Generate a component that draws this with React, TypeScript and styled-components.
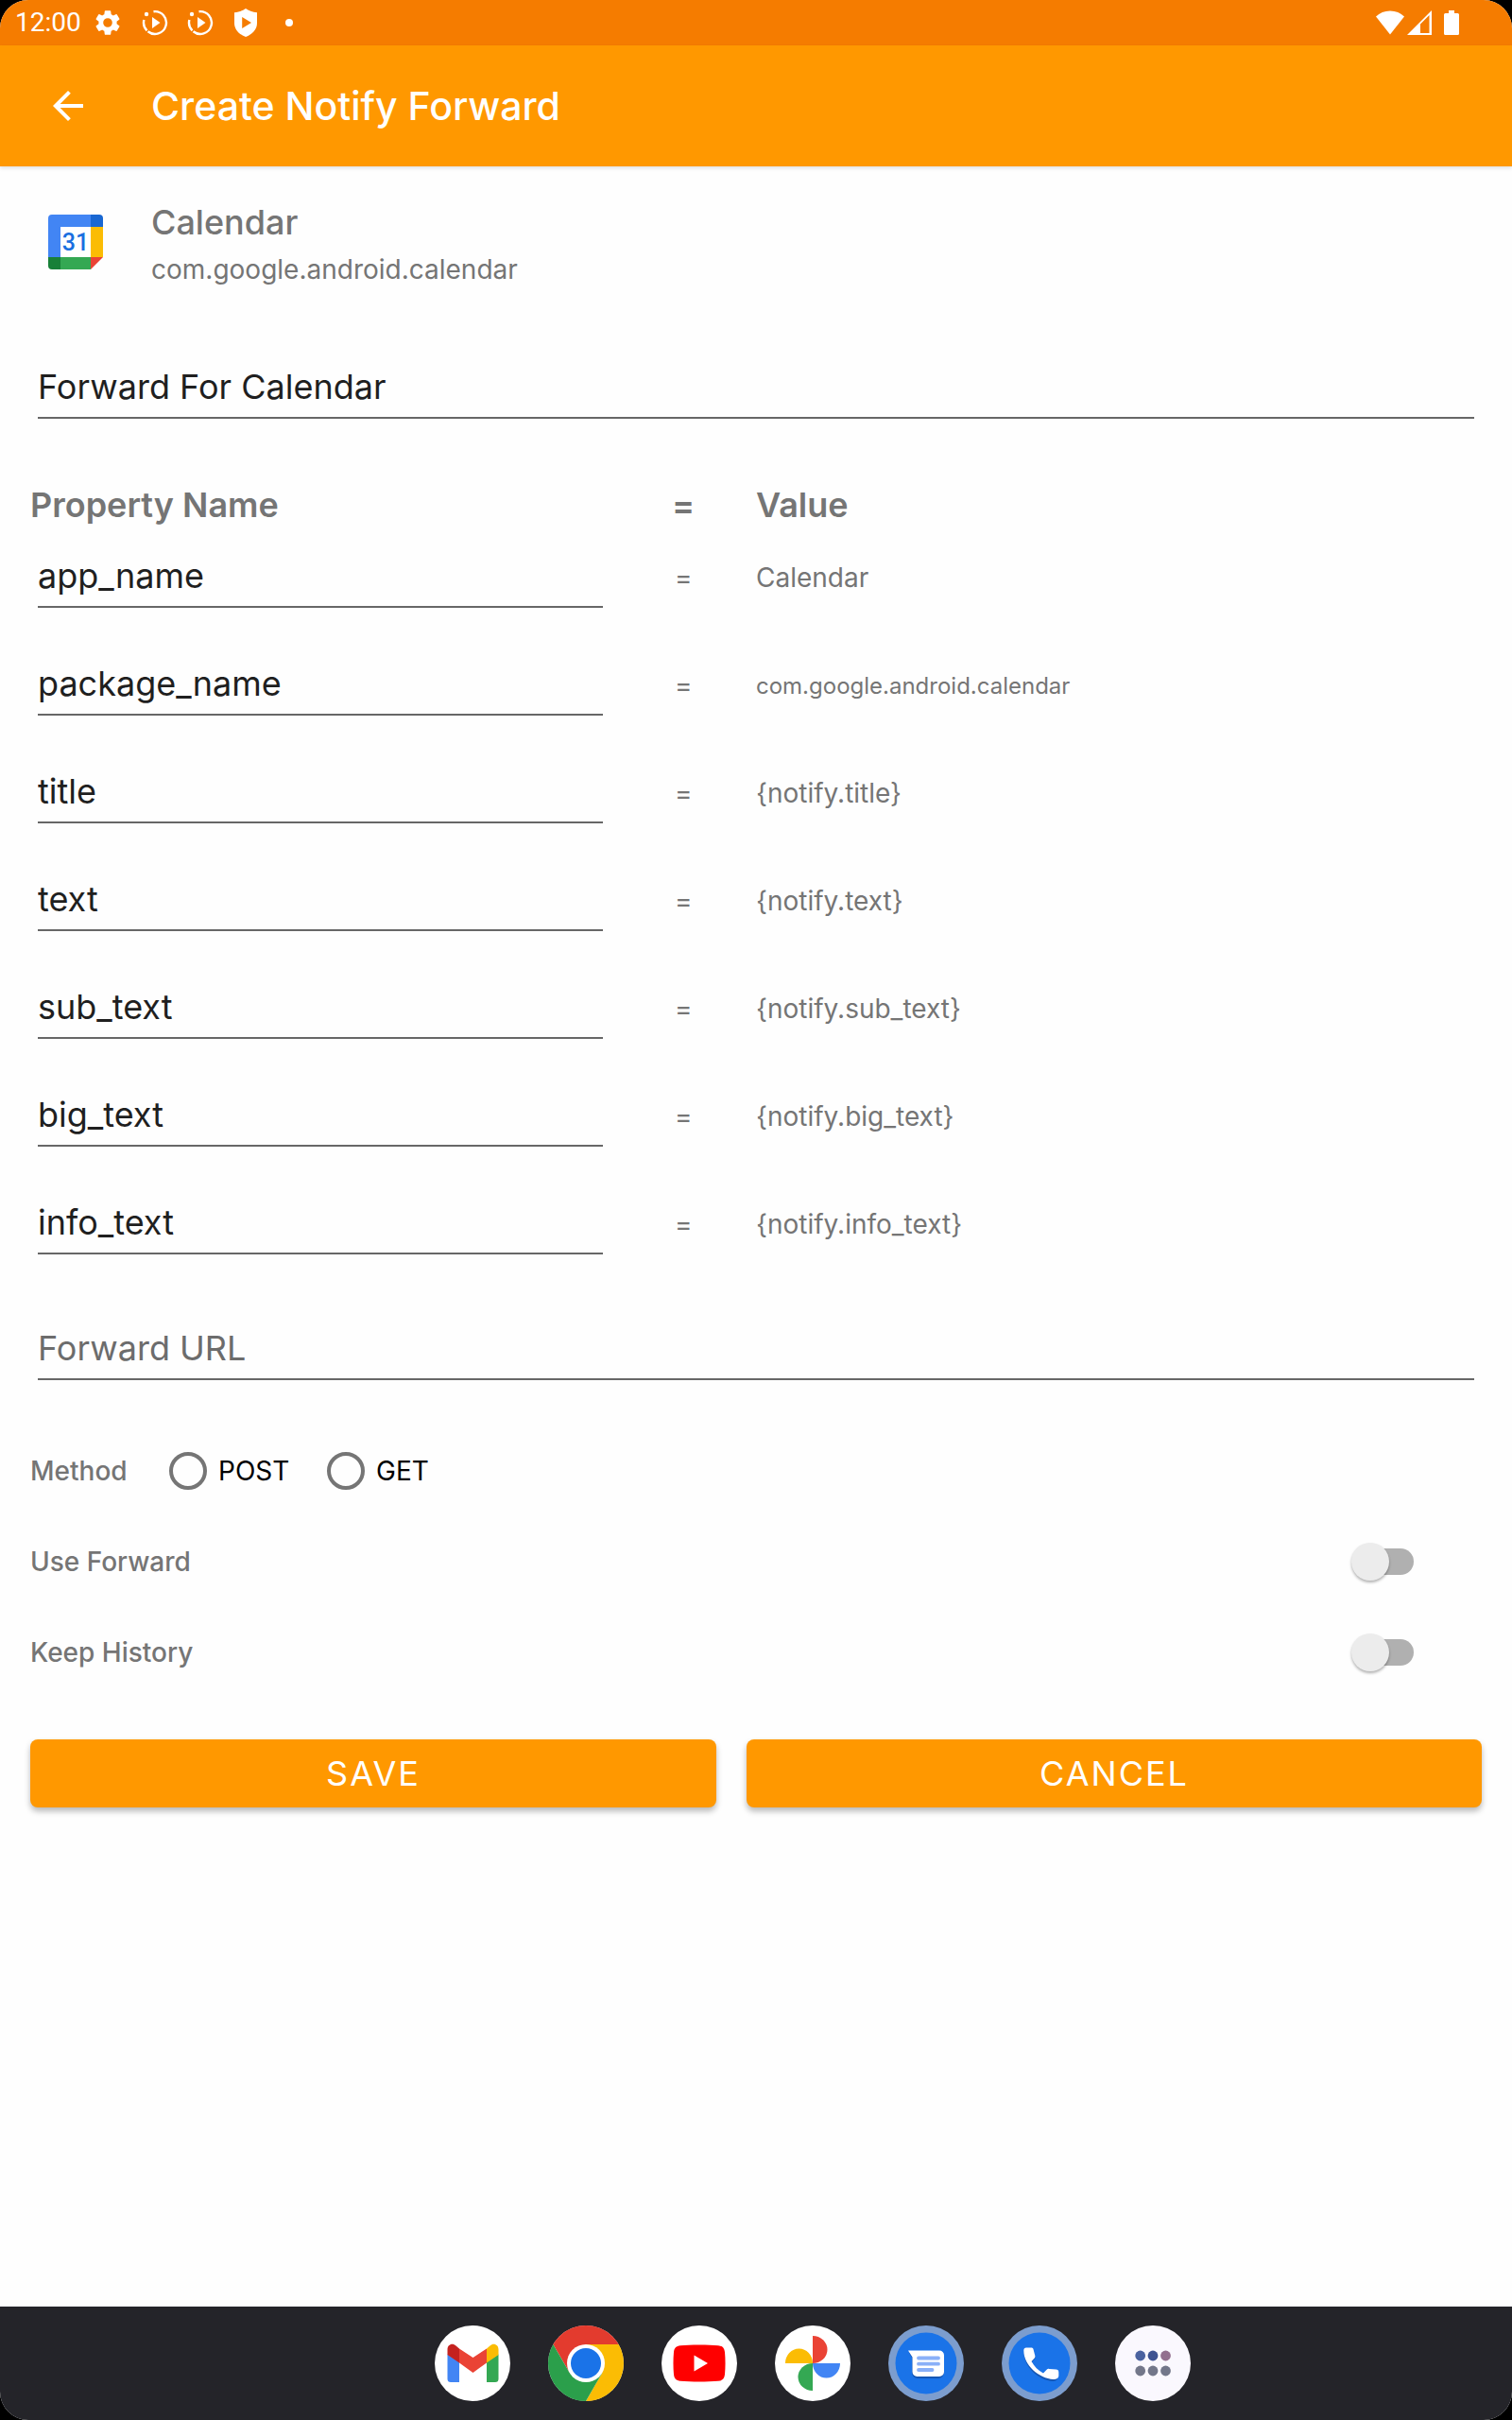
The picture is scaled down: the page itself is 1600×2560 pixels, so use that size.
import React, { useState } from "react";
import styled, { createGlobalStyle } from "styled-components";

const color = {
  primary: "#ff9800",
  primaryDark: "#f57c00",
  text: "#1f1f1f",
  secondary: "#757575",
  line: "#676767",
  surface: "#fefefe",
  dock: "#242429",
};

const GlobalStyle = createGlobalStyle`
  *, *::before, *::after { box-sizing: border-box; }
  body {
    margin: 0;
    background: #000;
    font-family: Inter, "Noto Sans", sans-serif;
  }
`;

const Screen = styled.div`
  display: flex;
  flex-direction: column;
  min-height: 100vh;
  overflow: hidden;
  border-radius: 30px;
  background: ${color.surface};
`;

const StatusBar = styled.div`
  display: flex;
  align-items: center;
  justify-content: space-between;
  height: 48px;
  padding: 0 56px 0 16px;
  background: ${color.primaryDark};
  color: #fff;
`;

const StatusGroup = styled.div<{ $gap: number }>`
  display: flex;
  align-items: center;
  gap: ${(p) => p.$gap}px;
`;

const Clock = styled.time`
  font: 400 28px/48px Roboto, sans-serif;
  margin-right: -8px;
`;

const Glyph = styled.svg`
  display: block;
  flex: none;
`;

const AppBar = styled.header`
  display: flex;
  align-items: center;
  gap: 64px;
  height: 128px;
  padding: 0 48px;
  background: ${color.primary};
  color: #fff;
  box-shadow: 0 2px 4px rgba(0, 0, 0, 0.12);
`;

const IconButton = styled.button`
  display: flex;
  padding: 0;
  border: 0;
  border-radius: 50%;
  background: none;
  color: inherit;
  cursor: pointer;
`;

const BarTitle = styled.h1`
  margin: 0;
  font-size: 41px;
  font-weight: 500;
  line-height: 56px;
`;

const Form = styled.form`
  display: flex;
  flex-direction: column;
  padding: 32px;
`;

const AppSummary = styled.section`
  display: flex;
  gap: 32px;
  margin-bottom: 71px;
`;

const AppIconBox = styled.div`
  display: flex;
  align-items: center;
  justify-content: center;
  width: 96px;
  height: 96px;
`;

const AppName = styled.h2`
  margin: 0;
  color: ${color.secondary};
  font-size: 36px;
  font-weight: 500;
  line-height: 54px;
`;

const PackageName = styled.p`
  margin: 0;
  color: ${color.secondary};
  font-size: 28px;
  line-height: 46px;
`;

const FieldBox = styled.div`
  display: flex;
  padding: 0 8px;
`;

const TextInput = styled.input`
  flex: 1;
  min-width: 0;
  height: 64px;
  padding: 0 0 2px;
  border: 0;
  border-bottom: 2px solid ${color.line};
  border-radius: 0;
  outline: 0;
  background: none;
  color: ${color.text};
  font: 400 36px/44px Inter, "Noto Sans", sans-serif;
  &::placeholder {
    color: #6c6c6c;
    opacity: 1;
  }
  &:focus {
    border-bottom-color: ${color.primary};
  }
`;

const PropertyTable = styled.table`
  width: 100%;
  margin: 71px 0 44px;
  border-collapse: collapse;
  table-layout: fixed;
  color: ${color.secondary};
`;

const HeadCell = styled.th<{ $width: string; $center?: boolean }>`
  width: ${(p) => p.$width};
  height: 40px;
  padding: 0;
  font-size: 36px;
  font-weight: 600;
  line-height: 40px;
  text-align: ${(p) => (p.$center ? "center" : "left")};
`;

const Cell = styled.td<{ $center?: boolean; $small?: boolean }>`
  height: 114px;
  padding: 0;
  font-size: ${(p) => (p.$small ? 24 : 28)}px;
  text-align: ${(p) => (p.$center ? "center" : "left")};
  overflow-wrap: anywhere;
`;

const Options = styled.div`
  display: flex;
  flex-direction: column;
  margin: 48px 0 44px;
`;

const MethodGroup = styled.div`
  display: flex;
  align-items: center;
  height: 96px;
`;

const OptionLabel = styled.span`
  min-width: 147px;
  color: ${color.secondary};
  font-size: 28px;
  font-weight: 500;
`;

const RadioLabel = styled.label`
  display: flex;
  align-items: center;
  gap: 12px;
  min-width: 167px;
  color: #000;
  font-size: 28px;
  cursor: pointer;
`;

const Radio = styled.input`
  appearance: none;
  width: 40px;
  height: 40px;
  margin: 0;
  border: 4px solid ${color.secondary};
  border-radius: 50%;
  &:checked {
    border-color: ${color.primary};
    background: radial-gradient(circle, ${color.primary} 10px, transparent 11px);
  }
`;

const SwitchRow = styled.label`
  display: flex;
  align-items: center;
  justify-content: space-between;
  height: 96px;
  padding-right: 72px;
  cursor: pointer;
`;

const Switch = styled.input`
  appearance: none;
  display: flex;
  align-items: center;
  width: 66px;
  height: 40px;
  margin: 0;
  border-radius: 20px;
  &::before {
    content: "";
    width: 40px;
    height: 40px;
    border-radius: 50%;
    background: #ececec;
    box-shadow: 0 2px 3px rgba(0, 0, 0, 0.3);
    z-index: 1;
  }
  &::after {
    content: "";
    width: 40px;
    height: 28px;
    margin-left: -14px;
    border-radius: 0 14px 14px 0;
    background: #b0b0b0;
  }
  &:checked::before {
    order: 2;
    margin-left: -14px;
    background: ${color.primary};
  }
  &:checked::after {
    margin-left: 0;
    border-radius: 14px 0 0 14px;
  }
`;

const Actions = styled.div`
  display: flex;
  gap: 32px;
`;

const ActionButton = styled.button<{ $grow: number }>`
  flex: ${(p) => p.$grow} 1 0;
  height: 72px;
  padding: 0;
  border: 0;
  border-radius: 8px;
  background: ${color.primary};
  box-shadow: 0 4px 6px rgba(0, 0, 0, 0.28);
  color: #fff;
  font: 400 36px/72px Inter, "Noto Sans", sans-serif;
  letter-spacing: 2px;
  text-transform: uppercase;
  cursor: pointer;
`;

const Dock = styled.nav`
  display: flex;
  align-items: center;
  justify-content: center;
  gap: 40px;
  height: 120px;
  margin-top: auto;
  padding-left: 120px;
  background: ${color.dock};
`;

const MotionIcon = () => (
  <Glyph width="28" height="28" viewBox="0 0 28 28" fill="none" stroke="#fff" strokeWidth="2.4">
    <path d="M12.500 2.200A11.900 11.900 0 1 1 6.500 23.200" />
    <path d="M2.400 11A11.900 11.900 0 0 0 5.500 22.300" />
    <circle cx="5" cy="5" r="2.200" fill="#fff" stroke="none" />
    <path d="M11 8v12L19.500 14z" fill="#fff" stroke="none" />
  </Glyph>
);

const StatusIcons = () => (
  <>
    <Glyph width="32" height="32" viewBox="0 0 24 24" fill="#fff">
      <path d="M19.14 12.94c.04-.3.06-.61.06-.94 0-.32-.02-.64-.07-.94l2.03-1.58a.49.49 0 0 0 .12-.61l-1.92-3.32a.49.49 0 0 0-.59-.22l-2.39.96c-.5-.38-1.03-.7-1.62-.94l-.36-2.54a.48.48 0 0 0-.48-.41h-3.84c-.24 0-.43.17-.47.41l-.36 2.54c-.59.24-1.13.57-1.62.94l-2.39-.96a.48.48 0 0 0-.59.22L2.74 8.87c-.12.21-.08.47.12.61l2.03 1.58c-.05.3-.09.63-.09.94s.02.64.07.94l-2.03 1.58a.49.49 0 0 0-.12.61l1.92 3.32c.12.22.37.29.59.22l2.39-.96c.5.38 1.03.7 1.62.94l.36 2.54c.05.24.24.41.48.41h3.84c.24 0 .44-.17.47-.41l.36-2.54c.59-.24 1.13-.56 1.62-.94l2.39.96c.22.08.47 0 .59-.22l1.92-3.32a.49.49 0 0 0-.12-.61l-2.01-1.58zM12 15.6A3.6 3.6 0 1 1 12 8.4a3.6 3.6 0 0 1 0 7.2z" />
    </Glyph>
    <MotionIcon />
    <MotionIcon />
    <Glyph width="28" height="30" viewBox="0 0 28 30" fill="#fff" fillRule="evenodd">
      <path d="M14 0c3 2.200 7 3.800 12 4.200v11.300C26 22 21 27.500 14 30 7 27.500 2 22 2 15.500V4.200C7 3.800 11 2.200 14 0zM10.200 9v12L20 15z" />
    </Glyph>
    <Glyph width="28" height="28" viewBox="0 0 28 28" fill="#fff">
      <circle cx="12" cy="14" r="4" />
    </Glyph>
  </>
);

const SignalIcons = () => (
  <>
    <StatusGroup $gap={3}>
      <Glyph width="30" height="26" viewBox="0 0 30 26" fill="#fff">
        <path d="M0 6.500C4 2.500 9 .5 15 .5s11 2 15 6L15 25.500z" />
      </Glyph>
      <Glyph width="26" height="26" viewBox="0 0 26 26" fill="#fff" fillRule="evenodd">
        <path d="M0 26 26 0v26zM14 14.500V24h9.500V5z" />
      </Glyph>
    </StatusGroup>
    <Glyph width="16" height="26" viewBox="0 0 16 26" fill="#fff">
      <path d="M5 0h6v3h3.500A1.500 1.500 0 0 1 16 4.500v20a1.500 1.500 0 0 1-1.500 1.500h-13A1.500 1.500 0 0 1 0 24.500v-20A1.500 1.500 0 0 1 1.500 3H5z" />
    </Glyph>
  </>
);

const CalendarIcon = () => (
  <Glyph width="58" height="58" viewBox="0 0 58 58" role="img" aria-label="Calendar">
    <path d="M13 13h32v32H13z" fill="#fff" />
    <path d="M4 0h41v13H13v32H0V4a4 4 0 0 1 4-4z" fill="#4285f4" />
    <path d="M45 0h9a4 4 0 0 1 4 4v9H45z" fill="#1967d2" />
    <path d="M45 13h13v32H45z" fill="#fbbc04" />
    <path d="M13 45h32v13H13z" fill="#34a853" />
    <path d="M0 45h13v13H4a4 4 0 0 1-4-4z" fill="#188038" />
    <path d="M45 45h13L45 58z" fill="#ea4335" />
    <text x="29" y="38" textAnchor="middle" fontFamily="Roboto, sans-serif" fontSize="25" fontWeight="500" fill="#1a6fe0">
      31
    </text>
  </Glyph>
);

const DockIcon = ({ children, fill = "#fff" }: { children: React.ReactNode; fill?: string }) => (
  <Glyph width="80" height="80" viewBox="0 0 80 80">
    <circle cx="40" cy="40" r="40" fill={fill} />
    {children}
  </Glyph>
);

const dockApps: { name: string; icon: React.ReactNode }[] = [
  {
    name: "Gmail",
    icon: (
      <DockIcon>
        <path d="M13.500 30.500 26 38.500V60h-9a3.500 3.500 0 0 1-3.500-3.500z" fill="#4285f4" />
        <path d="M55 38.500 67.500 30.500v26A3.500 3.500 0 0 1 64 60h-9z" fill="#34a853" />
        <path d="M26 24.500 40.500 34 55 24.500v15L40.500 50 26 39.500z" fill="#ea4335" />
        <path d="M55 24.500l3.500-3c4-3.500 9-1 9 4V31L55 39.500z" fill="#fbbc04" />
        <path d="M26 24.500l-3.500-3c-4-3.500-9-1-9 4V31L26 39.500z" fill="#c5221f" />
      </DockIcon>
    ),
  },
  {
    name: "Chrome",
    icon: (
      <DockIcon>
        <path d="M5.360 20A40 40 0 0 1 74.640 20H40L22.680 50z" fill="#e33b2e" />
        <path d="M74.640 20A40 40 0 0 1 40 80L57.320 50 40 20z" fill="#fbbc04" />
        <path d="M40 80A40 40 0 0 1 5.360 20L22.680 50H57.320z" fill="#2b9f4b" />
        <circle cx="40" cy="40" r="20" fill="#fff" />
        <circle cx="40" cy="40" r="16" fill="#1a73e8" />
      </DockIcon>
    ),
  },
  {
    name: "YouTube",
    icon: (
      <DockIcon>
        <path d="M40 20.500c8 0 15 .2 20 .7 4.500.4 6.500 2.500 7 7 .7 7.500.7 16 0 23.600-.5 4.500-2.500 6.600-7 7-11 1-29 1-40 0-4.500-.4-6.500-2.500-7-7-.7-7.600-.7-16.100 0-23.600.5-4.500 2.500-6.600 7-7 5-.5 12-.7 20-.7z" fill="#f00" />
        <path d="M34.500 31.500v17L49 40z" fill="#fff" />
      </DockIcon>
    ),
  },
  {
    name: "Photos",
    icon: (
      <DockIcon>
        <path d="M40 40V11a15.500 14.500 0 0 1 0 29z" fill="#ea4335" />
        <path d="M40 40h29a14.500 15.500 0 0 1-29 0z" fill="#4285f4" />
        <path d="M40 40v29a15.500 14.500 0 0 1 0-29z" fill="#34a853" />
        <path d="M40 40H11a14.500 15.500 0 0 1 29 0z" fill="#fbbc04" />
      </DockIcon>
    ),
  },
  {
    name: "Messages",
    icon: (
      <DockIcon fill="#7c9dce">
        <circle cx="40" cy="40" r="32.500" fill="#1a73e8" />
        <path d="M22 29l3 5v16a6 6 0 0 0 6 6h22a6 6 0 0 0 6-6V32z" fill="#1557b5" />
        <path d="M21 26.500h33a5 5 0 0 1 5 5v17.500a5 5 0 0 1-5 5H30.500a5 5 0 0 1-5-5V33.500z" fill="#fff" />
        <path d="M32 34.500h21M32 40.700h21M32 47h14.500" stroke="#8ab0f8" strokeWidth="3.800" strokeLinecap="round" />
      </DockIcon>
    ),
  },
  {
    name: "Phone",
    icon: (
      <DockIcon fill="#7c9dce">
        <circle cx="40" cy="40" r="32.500" fill="#1a73e8" />
        <path transform="translate(0 1.500)" d="M26 23.500h6.500l3.300 9-4.300 5.500c3 5.500 7 9.500 12.500 12.500l5-4.500 10 2V54c0 2-2 3.500-5 3.500-15-1-30.500-15-30.500-30.500 0-2 1-3.500 2.500-3.500z" fill="#1557b5" />
        <path d="M26 23.500h5c1.500 0 2.300.6 2.600 2l1.700 6.500c.3 1.200 0 2-.8 2.800L31.500 38c3 5.500 7 9.500 12.500 12.500l3.600-3.700c.8-.8 1.500-1.100 2.600-.9l7.300.7c1.800.2 2.800 1 2.800 2.800V53c0 2.800-2.300 4-5.500 4-15.500-1-31.500-15-31.500-30.500 0-2 1-3 2.700-3z" fill="#fff" />
      </DockIcon>
    ),
  },
  {
    name: "All apps",
    icon: (
      <DockIcon fill="#faf8fe">
        <circle cx="26.700" cy="32" r="5.400" fill="#4a62a0" />
        <circle cx="40" cy="32" r="5.400" fill="#3e5391" />
        <circle cx="53.500" cy="32" r="5.400" fill="#926f8e" />
        <circle cx="26.700" cy="48" r="5.400" fill="#73778a" />
        <circle cx="40" cy="48" r="5.400" fill="#73778a" />
        <circle cx="53.500" cy="48" r="5.400" fill="#73778a" />
      </DockIcon>
    ),
  },
];

const properties = [
  { key: "app_name", value: "Calendar" },
  { key: "package_name", value: "com.google.android.calendar", small: true },
  { key: "title", value: "{notify.title}" },
  { key: "text", value: "{notify.text}" },
  { key: "sub_text", value: "{notify.sub_text}" },
  { key: "big_text", value: "{notify.big_text}" },
  { key: "info_text", value: "{notify.info_text}" },
];

export default function App() {
  const [method, setMethod] = useState("");

  return (
    <>
      <GlobalStyle />
      <Screen>
        <StatusBar>
          <StatusGroup $gap={20}>
            <Clock>12:00</Clock>
            <StatusIcons />
          </StatusGroup>
          <StatusGroup $gap={13}>
            <SignalIcons />
          </StatusGroup>
        </StatusBar>

        <AppBar>
          <IconButton type="button" aria-label="Back">
            <Glyph width="48" height="48" viewBox="0 0 24 24" fill="currentColor">
              <path d="M20 11H7.830l5.590-5.590L12 4l-8 8 8 8 1.410-1.410L7.830 13H20v-2z" />
            </Glyph>
          </IconButton>
          <BarTitle>Create Notify Forward</BarTitle>
        </AppBar>

        <Form onSubmit={(e) => e.preventDefault()}>
          <AppSummary>
            <AppIconBox>
              <CalendarIcon />
            </AppIconBox>
            <div>
              <AppName>Calendar</AppName>
              <PackageName>com.google.android.calendar</PackageName>
            </div>
          </AppSummary>

          <FieldBox>
            <TextInput aria-label="Forward name" defaultValue="Forward For Calendar" />
          </FieldBox>

          <PropertyTable>
            <thead>
              <tr>
                <HeadCell $width="40%">Property Name</HeadCell>
                <HeadCell $width="10%" $center>
                  =
                </HeadCell>
                <HeadCell $width="50%">Value</HeadCell>
              </tr>
            </thead>
            <tbody>
              {properties.map((p) => (
                <tr key={p.key}>
                  <Cell>
                    <FieldBox>
                      <TextInput aria-label={`Property name for ${p.value}`} defaultValue={p.key} />
                    </FieldBox>
                  </Cell>
                  <Cell $center>=</Cell>
                  <Cell $small={p.small}>{p.value}</Cell>
                </tr>
              ))}
            </tbody>
          </PropertyTable>

          <FieldBox>
            <TextInput type="url" aria-label="Forward URL" placeholder="Forward URL" />
          </FieldBox>

          <Options>
            <MethodGroup role="radiogroup" aria-labelledby="method-label">
              <OptionLabel id="method-label">Method</OptionLabel>
              {["POST", "GET"].map((m) => (
                <RadioLabel key={m}>
                  <Radio type="radio" name="method" value={m} checked={method === m} onChange={() => setMethod(m)} />
                  {m}
                </RadioLabel>
              ))}
            </MethodGroup>
            {["Use Forward", "Keep History"].map((name) => (
              <SwitchRow key={name}>
                <OptionLabel>{name}</OptionLabel>
                <Switch type="checkbox" role="switch" />
              </SwitchRow>
            ))}
          </Options>

          <Actions>
            <ActionButton type="submit" $grow={14}>
              Save
            </ActionButton>
            <ActionButton type="button" $grow={15}>
              Cancel
            </ActionButton>
          </Actions>
        </Form>

        <Dock aria-label="Dock">
          {dockApps.map((app) => (
            <IconButton key={app.name} type="button" aria-label={app.name}>
              {app.icon}
            </IconButton>
          ))}
        </Dock>
      </Screen>
    </>
  );
}
